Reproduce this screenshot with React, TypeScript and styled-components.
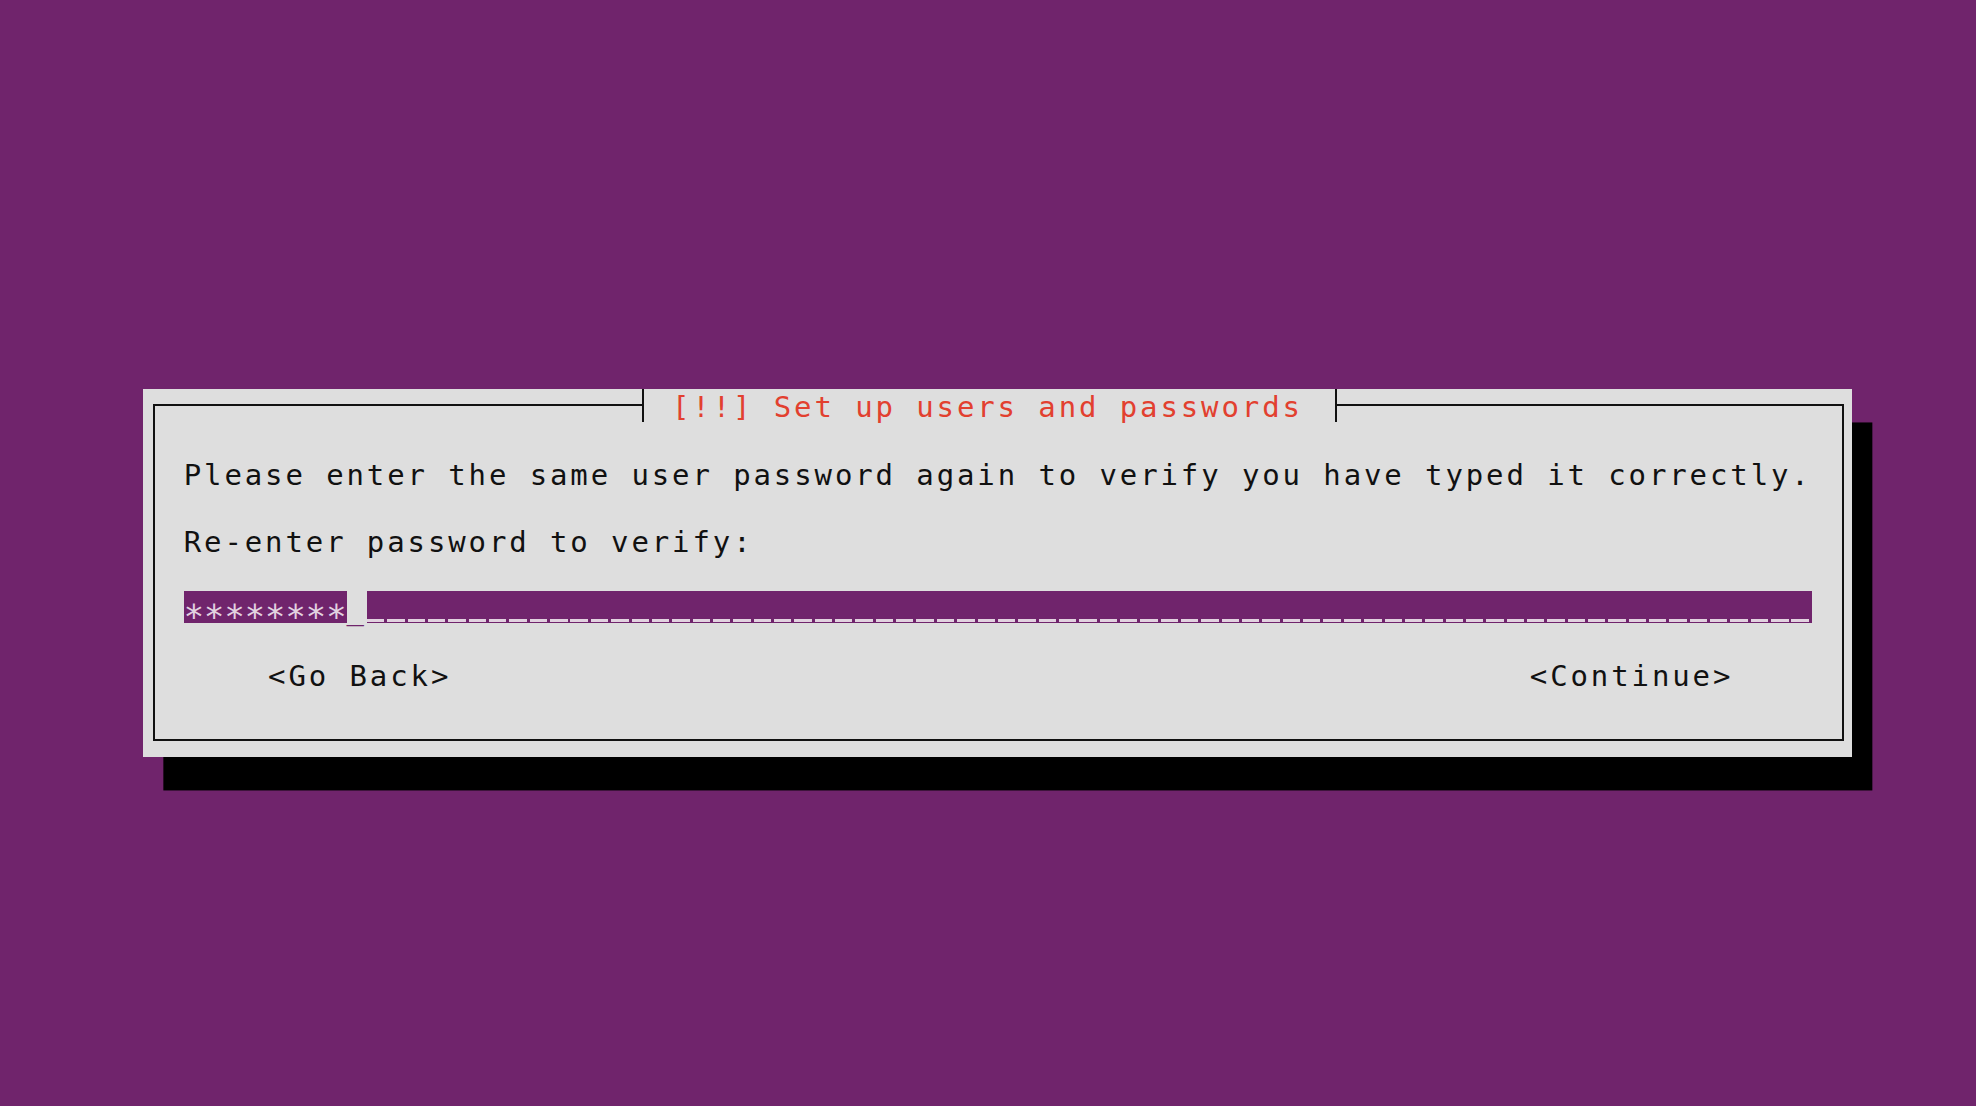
import React from 'react';
import styled, { createGlobalStyle } from 'styled-components';

// terminal grid as measured on the screenshot
const CELL = 20.35;
const ROW = 33.45;

const PURPLE = '#70246c';
const GRAY = '#dedede';
const INK = '#111111';
const RED = '#e2402f';
const LILAC = '#e2d2e0';

const GlobalStyle = createGlobalStyle`
  html, body { margin: 0; padding: 0; background: ${PURPLE}; }
  body {
    font-family: "DejaVu Sans Mono", "Liberation Mono", monospace;
    font-size: 29px;
    letter-spacing: ${CELL - 29 * 0.60205}px;
  }
`;

const Screen = styled.div`
  min-height: 100vh;
  box-sizing: border-box;
  padding: 389px 0 0 143px;
`;

const Dialog = styled.div`
  width: ${84 * CELL}px;
  height: ${11 * ROW}px;
  box-sizing: border-box;
  padding: 0 8px 16px 10px;
  background: ${GRAY};
  box-shadow: ${CELL}px ${ROW}px 0 0 #000;
  display: flex;
  flex-direction: column;
`;

const TitleBar = styled.div`
  display: flex;
  height: ${ROW}px;
  flex-shrink: 0;
`;

const Rule = styled.div<{ $side: 'left' | 'right' }>`
  margin-top: 15px;
  border-top: 2px solid ${INK};
  ${p => p.$side === 'left'
    ? `width: 487px; border-left: 2px solid ${INK};`
    : `flex: 1; border-right: 2px solid ${INK};`}
`;

const Title = styled.div`
  height: ${ROW}px;
  padding: 0 32px 0 28px;
  border-left: 2px solid ${INK};
  border-right: 2px solid ${INK};
  color: ${RED};
  line-height: 36px;
  white-space: pre;
`;

const Body = styled.div`
  flex: 1;
  border: 2px solid ${INK};
  border-top: none;
  padding: ${ROW}px 31.3px 0 28.7px;
  display: grid;
  grid-auto-rows: ${ROW}px;
  row-gap: ${ROW}px;
  align-content: start;
`;

const Line = styled.div`
  color: ${INK};
  line-height: 38px;
  white-space: pre;
`;

const Field = styled.div`
  display: flex;
  padding-top: 1px;
  line-height: 37px;
  white-space: pre;
`;

const Masked = styled.div`
  flex: 0 0 ${8 * CELL}px;
  background: ${PURPLE};
  color: ${LILAC};
  font-size: 34px;
  letter-spacing: ${CELL - 34 * 0.60205}px;
  line-height: 38px;
`;

const Cursor = styled.div`
  flex: 0 0 ${CELL}px;
  color: ${PURPLE};
`;

// the empty part of the entry is a run of "_" cells
const Blank = styled.div`
  flex: 1;
  background-color: ${PURPLE};
  background-image: repeating-linear-gradient(
    to right,
    ${LILAC} 0px,
    ${LILAC} ${CELL - 3}px,
    ${PURPLE} ${CELL - 3}px,
    ${PURPLE} ${CELL}px
  );
  background-size: 100% 3px;
  background-position: left calc(100% - 1px);
  background-repeat: no-repeat;
`;

const Buttons = styled.div`
  display: flex;
  justify-content: space-between;
  padding: 0 ${4 * CELL - 3}px 0 ${4 * CELL + 3}px;
  color: ${INK};
  line-height: 38px;
  white-space: pre;
`;

export default function App() {
  return (
    <>
      <GlobalStyle />
      <Screen>
        <Dialog>
          <TitleBar>
            <Rule $side="left" />
            <Title>[!!] Set up users and passwords</Title>
            <Rule $side="right" />
          </TitleBar>
          <Body>
            <Line>Please enter the same user password again to verify you have typed it correctly.</Line>
            <Line>Re-enter password to verify:</Line>
            <Field>
              <Masked>{'∗'.repeat(8)}</Masked>
              <Cursor>_</Cursor>
              <Blank />
            </Field>
            <Buttons>
              <span>&lt;Go Back&gt;</span>
              <span>&lt;Continue&gt;</span>
            </Buttons>
          </Body>
        </Dialog>
      </Screen>
    </>
  );
}
